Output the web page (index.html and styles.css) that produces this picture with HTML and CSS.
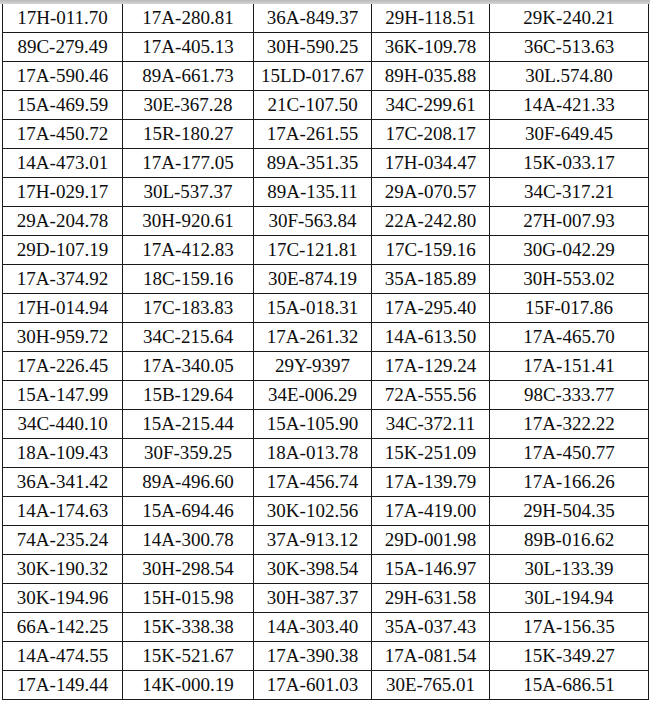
FILE: index.html
```html
<!DOCTYPE html>
<html>
<head>
<meta charset="utf-8">
<link rel="stylesheet" href="styles.css">
</head>
<body>
<div class="band"></div>
<table class="plates">
<colgroup><col class="c1"><col class="c2"><col class="c3"><col class="c4"><col class="c5"></colgroup>
<tbody>
<tr><td>17H-011.70</td><td>17A-280.81</td><td>36A-849.37</td><td>29H-118.51</td><td>29K-240.21</td></tr>
<tr><td>89C-279.49</td><td>17A-405.13</td><td>30H-590.25</td><td>36K-109.78</td><td>36C-513.63</td></tr>
<tr><td>17A-590.46</td><td>89A-661.73</td><td>15LD-017.67</td><td>89H-035.88</td><td>30L.574.80</td></tr>
<tr><td>15A-469.59</td><td>30E-367.28</td><td>21C-107.50</td><td>34C-299.61</td><td>14A-421.33</td></tr>
<tr><td>17A-450.72</td><td>15R-180.27</td><td>17A-261.55</td><td>17C-208.17</td><td>30F-649.45</td></tr>
<tr><td>14A-473.01</td><td>17A-177.05</td><td>89A-351.35</td><td>17H-034.47</td><td>15K-033.17</td></tr>
<tr><td>17H-029.17</td><td>30L-537.37</td><td>89A-135.11</td><td>29A-070.57</td><td>34C-317.21</td></tr>
<tr><td>29A-204.78</td><td>30H-920.61</td><td>30F-563.84</td><td>22A-242.80</td><td>27H-007.93</td></tr>
<tr><td>29D-107.19</td><td>17A-412.83</td><td>17C-121.81</td><td>17C-159.16</td><td>30G-042.29</td></tr>
<tr><td>17A-374.92</td><td>18C-159.16</td><td>30E-874.19</td><td>35A-185.89</td><td>30H-553.02</td></tr>
<tr><td>17H-014.94</td><td>17C-183.83</td><td>15A-018.31</td><td>17A-295.40</td><td>15F-017.86</td></tr>
<tr><td>30H-959.72</td><td>34C-215.64</td><td>17A-261.32</td><td>14A-613.50</td><td>17A-465.70</td></tr>
<tr><td>17A-226.45</td><td>17A-340.05</td><td>29Y-9397</td><td>17A-129.24</td><td>17A-151.41</td></tr>
<tr><td>15A-147.99</td><td>15B-129.64</td><td>34E-006.29</td><td>72A-555.56</td><td>98C-333.77</td></tr>
<tr><td>34C-440.10</td><td>15A-215.44</td><td>15A-105.90</td><td>34C-372.11</td><td>17A-322.22</td></tr>
<tr><td>18A-109.43</td><td>30F-359.25</td><td>18A-013.78</td><td>15K-251.09</td><td>17A-450.77</td></tr>
<tr><td>36A-341.42</td><td>89A-496.60</td><td>17A-456.74</td><td>17A-139.79</td><td>17A-166.26</td></tr>
<tr><td>14A-174.63</td><td>15A-694.46</td><td>30K-102.56</td><td>17A-419.00</td><td>29H-504.35</td></tr>
<tr><td>74A-235.24</td><td>14A-300.78</td><td>37A-913.12</td><td>29D-001.98</td><td>89B-016.62</td></tr>
<tr><td>30K-190.32</td><td>30H-298.54</td><td>30K-398.54</td><td>15A-146.97</td><td>30L-133.39</td></tr>
<tr><td>30K-194.96</td><td>15H-015.98</td><td>30H-387.37</td><td>29H-631.58</td><td>30L-194.94</td></tr>
<tr><td>66A-142.25</td><td>15K-338.38</td><td>14A-303.40</td><td>35A-037.43</td><td>17A-156.35</td></tr>
<tr><td>14A-474.55</td><td>15K-521.67</td><td>17A-390.38</td><td>17A-081.54</td><td>15K-349.27</td></tr>
<tr><td>17A-149.44</td><td>14K-000.19</td><td>17A-601.03</td><td>30E-765.01</td><td>15A-686.51</td></tr>
</tbody>
</table>
</body>
</html>
```
FILE: styles.css
```css
html, body {
  margin: 0;
  padding: 0;
  background: #ffffff;
}
body {
  font-family: "Liberation Serif", "Times New Roman", serif;
  color: #0d0d0d;
}
.band {
  height: 4px;
  background: linear-gradient(#b8b8b8, #d4d4d4);
}
.plates {
  border-collapse: collapse;
  table-layout: fixed;
  margin-left: 2px;
  width: 646px;
}
.c1 { width: 120px; }
.c2 { width: 131px; }
.c3 { width: 118px; }
.c4 { width: 118px; }
.c5 { width: 159px; }
.plates td {
  border: 1px solid #1a1a1a;
  height: 28px;
  padding: 0;
  text-align: center;
  font-size: 19px;
  line-height: 20px;
  white-space: nowrap;
}
.plates tr:first-child td {
  border-top: none;
}
```
